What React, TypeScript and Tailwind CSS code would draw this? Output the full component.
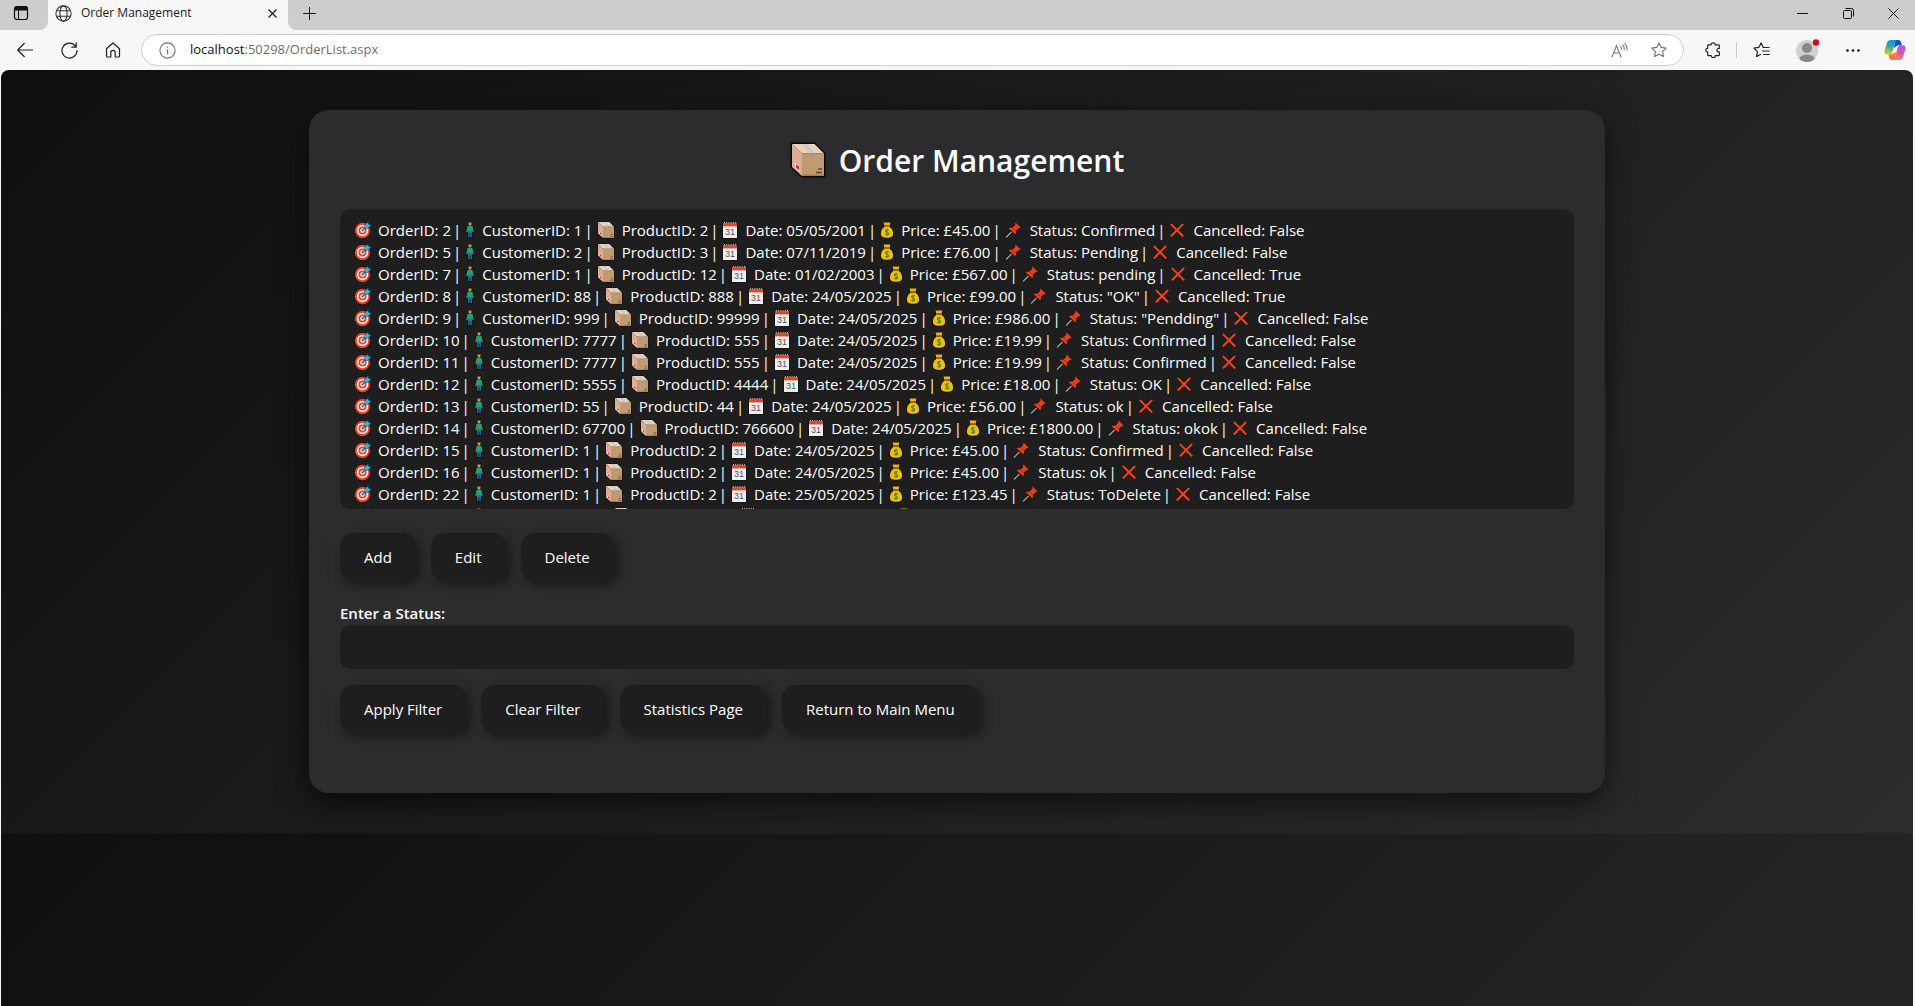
import React from "react";

type Order = {
  id: string;
  customer: string;
  product: string;
  date: string;
  price: string;
  status: string;
  cancelled: string;
};

const orders: Order[] = [
  { id: "2", customer: "1", product: "2", date: "05/05/2001", price: "45.00", status: "Confirmed", cancelled: "False" },
  { id: "5", customer: "2", product: "3", date: "07/11/2019", price: "76.00", status: "Pending", cancelled: "False" },
  { id: "7", customer: "1", product: "12", date: "01/02/2003", price: "567.00", status: "pending", cancelled: "True" },
  { id: "8", customer: "88", product: "888", date: "24/05/2025", price: "99.00", status: '"OK"', cancelled: "True" },
  { id: "9", customer: "999", product: "99999", date: "24/05/2025", price: "986.00", status: '"Pendding"', cancelled: "False" },
  { id: "10", customer: "7777", product: "555", date: "24/05/2025", price: "19.99", status: "Confirmed", cancelled: "False" },
  { id: "11", customer: "7777", product: "555", date: "24/05/2025", price: "19.99", status: "Confirmed", cancelled: "False" },
  { id: "12", customer: "5555", product: "4444", date: "24/05/2025", price: "18.00", status: "OK", cancelled: "False" },
  { id: "13", customer: "55", product: "44", date: "24/05/2025", price: "56.00", status: "ok", cancelled: "False" },
  { id: "14", customer: "67700", product: "766600", date: "24/05/2025", price: "1800.00", status: "okok", cancelled: "False" },
  { id: "15", customer: "1", product: "2", date: "24/05/2025", price: "45.00", status: "Confirmed", cancelled: "False" },
  { id: "16", customer: "1", product: "2", date: "24/05/2025", price: "45.00", status: "ok", cancelled: "False" },
  { id: "22", customer: "1", product: "2", date: "25/05/2025", price: "123.45", status: "ToDelete", cancelled: "False" },
  { id: "23", customer: "12", product: "2", date: "25/05/2025", price: "45.00", status: "ok", cancelled: "False" },
];

function TargetIcon() {
  return (
    <svg className="mr-[6px] h-[18px] w-[18px] shrink-0" viewBox="0 0 18 18" aria-hidden="true">
      <circle cx="8.5" cy="9.5" r="8.3" fill="#111" />
      <circle cx="8.5" cy="9.5" r="7.7" fill="#e5432a" />
      <circle cx="8.5" cy="9.5" r="5.7" fill="#f6f2f1" />
      <circle cx="8.5" cy="9.5" r="4" fill="#e5432a" />
      <circle cx="8.5" cy="9.5" r="2.3" fill="#f6f2f1" />
      <circle cx="8.5" cy="9.5" r="1.1" fill="#e5432a" />
      <path d="M8.5 9.5 13 5" stroke="#1c6ea6" strokeWidth="1.2" />
      <path d="M10.8 7.6 10.6 4.6 14 1l.6 2.3 2.6.8-3.6 3.4z" fill="#2fb4f0" stroke="#123c58" strokeWidth=".5" />
    </svg>
  );
}

function PersonIcon() {
  return (
    <svg className="mr-[7px] h-[18px] w-[10px] shrink-0" viewBox="0 0 10 18" aria-hidden="true">
      <path d="M3.4 1h3.2v3.4l1.8 1.2.5 6.2H7.300V17H2.700v-5.200H1.100l.5-6.200 1.800-1.200z" fill="#111" stroke="#111" strokeWidth=".6" />
      <rect x="3.600" y="1" width="2.800" height="3.600" rx="1.200" fill="#d9a43a" />
      <path d="M3.600 1h2.800v1.200H3.600z" fill="#8a5a20" />
      <path d="M2.500 5h5l.7 3.600H7v2.200H3V8.600H1.800z" fill="#17a583" />
      <path d="M1.600 8.600h1v2.600h-1zM7.400 8.600h1v2.600h-1z" fill="#d9a43a" />
      <path d="M3.100 10.600h3.800V16H5.400v-3.400h-.8V16H3.100z" fill="#1f6fb4" />
    </svg>
  );
}

function BoxIcon({ className, outline }: { className: string; outline: number }) {
  return (
    <svg className={className} viewBox="0 0 36 36" aria-hidden="true">
      <path d="M2 2h22.500l9.500 9.500V34H12L2 25z" fill="#0c0a09" stroke="#0c0a09" strokeWidth={outline} strokeLinejoin="round" />
      <path d="M2 2h22.500L34 11.500H12z" fill="#edd0bb" />
      <path d="M2 2l10 9.500V34L2 25z" fill="#dbae95" />
      <path d="M12 11.500h22V34H12z" fill="#c19a70" />
      <path d="M12 32.500h22V34H12z" fill="#a87e52" />
      <path d="M12 2h5l8 9.500h-5z" fill="#c9c8ca" />
      <path d="M20 11.500h5V14h-5z" fill="#9a938c" />
      <path d="M5 20.500l5 4v5.500l-5-4z" fill="#f3ded5" />
      <path d="M6 22.200l3.200 2.600v3.400L6 25.600z" fill="#e01f3d" />
      <path d="M28 27h4M26 30.500h6" stroke="#5d4630" strokeWidth="1.3" />
    </svg>
  );
}

function CalendarIcon() {
  return (
    <svg className="mr-[7px] h-[18px] w-[16px] shrink-0" viewBox="0 0 16 18" aria-hidden="true">
      <rect x=".3" y="1" width="15.400" height="16.600" fill="#111" />
      <rect x="1" y="2" width="14" height="15" fill="#f1f0f0" />
      <rect x="1" y="2" width="14" height="3.400" fill="#e5432a" />
      <path d="M2 1.700h12" stroke="#f6d8d3" strokeWidth="1" strokeDasharray="1 1.200" />
      <text x="8" y="14.300" textAnchor="middle" fontFamily="Liberation Sans" fontSize="9" fill="#555">31</text>
    </svg>
  );
}

function MoneyIcon() {
  return (
    <svg className="mr-[7px] h-[18px] w-[14px] shrink-0" viewBox="0 0 14 18" aria-hidden="true">
      <path d="M3 1h8v3.500l-1 1c2.600 1.800 3.800 4.500 3.800 7.200 0 3-2 4.800-6.800 4.800S.2 15.700.2 12.700C.2 10 1.400 7.300 4 5.500l-1-1z" fill="#111" />
      <path d="M4.500 5.700h5c2.500 1.700 3.600 4.200 3.600 6.800 0 3-2 4.200-6.100 4.200S.9 15.500.9 12.500c0-2.600 1.100-5.100 3.600-6.800z" fill="#f7bd0c" />
      <path d="M3.500 1.500h7L9.700 4.500H4.300z" fill="#f2b21a" />
      <path d="M4 5.100h6" stroke="#b0761a" strokeWidth="1.100" />
      <path d="M8.900 9.200C7.900 8.300 5.400 8.500 5.400 10c0 1.700 3.400.9 3.400 2.600 0 1.500-2.500 1.600-3.600.7M7 7.700v7" fill="none" stroke="#3f8f2f" strokeWidth="1.100" />
    </svg>
  );
}

function PinIcon() {
  return (
    <svg className="mr-[8px] h-[18px] w-[17px] shrink-0" viewBox="0 0 17 18" aria-hidden="true">
      <path d="M1 16.500 6.500 11" stroke="#111" strokeWidth="2.400" />
      <path d="M1 16.500 6.500 11" stroke="#a9a9a9" strokeWidth="1.200" />
      <path d="M10.600 1.200l5.500 5.400c-.8.900-1.700 1-2.500.8L11.300 9.800c.3 1.600 0 2.900-.9 3.900L3.300 7.200c1.100-.9 2.500-1.200 4-.8l2.600-2.500c-.3-1-.1-1.900.7-2.700z" fill="#e8401c" stroke="#1a0d09" strokeWidth=".6" />
      <path d="M7.600 6.800l3.200 3.100" stroke="#b52d10" strokeWidth="1" />
    </svg>
  );
}

function CrossIcon() {
  return (
    <svg className="mr-[8px] h-[18px] w-[16px] shrink-0" viewBox="0 0 16 18" aria-hidden="true">
      <path d="M1.800 3l12.400 12.400M14.200 3 1.800 15.400" stroke="#180b08" strokeWidth="3.600" />
      <path d="M1.800 3l12.400 12.400M14.200 3 1.800 15.400" stroke="#e5421f" strokeWidth="2.300" />
    </svg>
  );
}

function Bar() {
  return <span className="mr-[4px] ml-[2px]">|</span>;
}

function OrderRow({ order }: { order: Order }) {
  return (
    <li role="option" aria-selected="false" className="flex h-[22px] items-center whitespace-pre">
      <TargetIcon />
      <span>OrderID: {order.id}</span>
      <Bar />
      <PersonIcon />
      <span>CustomerID: {order.customer}</span>
      <Bar />
      <BoxIcon className="mr-[7px] h-[18px] w-[18px] shrink-0" outline={2} />
      <span>ProductID: {order.product}</span>
      <Bar />
      <CalendarIcon />
      <span>Date: {order.date}</span>
      <Bar />
      <MoneyIcon />
      <span>Price: £{order.price}</span>
      <Bar />
      <PinIcon />
      <span>Status: {order.status}</span>
      <Bar />
      <CrossIcon />
      <span>Cancelled: {order.cancelled}</span>
    </li>
  );
}

function ActionButton({ children }: { children: React.ReactNode }) {
  return (
    <button
      type="button"
      className="h-12 rounded-[14px] bg-[#1e1e1e] px-6 text-[15px] text-white shadow-[4px_4px_10px_#1a1a1a,-4px_-4px_10px_#2e2e2e]"
    >
      {children}
    </button>
  );
}

function IconButton({ label, className, children }: { label: string; className: string; children: React.ReactNode }) {
  return (
    <button type="button" aria-label={label} className={className}>
      {children}
    </button>
  );
}

const centered = "flex h-8 w-11 shrink-0 items-center justify-center";

function TabStrip() {
  return (
    <div className="flex h-[30px] bg-[#f7f7f7]">
      <div className="flex w-12 rounded-br-lg bg-[#cdcdcd]">
        <IconButton label="Tab actions" className="flex h-[26px] w-[42px] items-center justify-center">
          <svg className="h-4 w-4" viewBox="0 0 16 16" fill="none" stroke="#111" aria-hidden="true">
            <rect x="1.500" y="1.500" width="13" height="13" rx="2.500" strokeWidth="1.200" />
            <path d="M1.500 4V3.500a2 2 0 0 1 2-2h9a2 2 0 0 1 2 2V5h-13z" fill="#111" />
            <path d="M5.500 5v9.500" strokeWidth="1.100" />
          </svg>
        </IconButton>
      </div>
      <div className="flex w-60 items-center pr-2 pb-1 pl-[7px]">
        <svg className="h-[17px] w-[17px]" viewBox="0 0 17 17" fill="none" stroke="#333" strokeWidth="1.100" aria-hidden="true">
          <circle cx="8.500" cy="8.500" r="7.600" />
          <ellipse cx="8.500" cy="8.500" rx="3.600" ry="7.600" />
          <path d="M1.600 5.800h13.800M1.600 11.200h13.800" />
        </svg>
        <span className="ml-[9px] flex-1 text-[12px] text-[#1b1b1b]">Order Management</span>
        <IconButton label="Close tab" className="flex h-4 w-4 items-center justify-center">
          <svg className="h-[9px] w-[9px]" viewBox="0 0 9 9" stroke="#222" strokeWidth="1.300" aria-hidden="true">
            <path d="M.5.500l8 8M8.500.500l-8 8" />
          </svg>
        </IconButton>
      </div>
      <div className="flex flex-1 justify-between rounded-bl-lg bg-[#cdcdcd] pb-1">
        <IconButton label="New tab" className="flex w-[43px] items-center justify-center">
          <svg className="h-[13px] w-[13px]" viewBox="0 0 13 13" stroke="#111" strokeWidth="1" aria-hidden="true">
            <path d="M6.500 0v13M0 6.500h13" />
          </svg>
        </IconButton>
        <div className="flex">
          <IconButton label="Minimize" className="flex w-[46px] items-center justify-center">
            <svg className="h-[11px] w-[11px]" viewBox="0 0 11 11" stroke="#111" aria-hidden="true">
              <path d="M0 5.500h11" />
            </svg>
          </IconButton>
          <IconButton label="Restore" className="flex w-[46px] items-center justify-center">
            <svg className="h-[11px] w-[11px]" viewBox="0 0 11 11" fill="none" stroke="#111" aria-hidden="true">
              <rect x=".5" y="2.500" width="8" height="8" rx="1" />
              <path d="M2.500.500h6a2 2 0 0 1 2 2v6" />
            </svg>
          </IconButton>
          <IconButton label="Close" className="flex w-11 items-center justify-center">
            <svg className="h-[11px] w-[11px]" viewBox="0 0 11 11" stroke="#111" aria-hidden="true">
              <path d="M.5.500l10 10M10.500.500l-10 10" />
            </svg>
          </IconButton>
        </div>
      </div>
    </div>
  );
}

function Toolbar() {
  return (
    <div className="flex h-10 items-center pl-[3px]">
      <IconButton label="Back" className={centered}>
        <svg className="h-4 w-4" viewBox="0 0 16 16" fill="none" stroke="#222" strokeWidth="1.200" strokeLinecap="round" strokeLinejoin="round" aria-hidden="true">
          <path d="M15.500 8H.8M7.200 1.500.700 8l6.500 6.500" />
        </svg>
      </IconButton>
      <IconButton label="Refresh" className={centered}>
        <svg className="h-[17px] w-[17px]" viewBox="0 0 17 17" fill="none" stroke="#222" strokeWidth="1.200" strokeLinecap="round" strokeLinejoin="round" aria-hidden="true">
          <path d="M16 8.500A7.500 7.500 0 1 1 14.600 4.200M15.200.800v4.400h-4.400" />
        </svg>
      </IconButton>
      <IconButton label="Home" className={centered}>
        <svg className="h-4 w-4" viewBox="0 0 16 16" fill="none" stroke="#222" strokeWidth="1.200" strokeLinejoin="round" aria-hidden="true">
          <path d="M1.500 6.800 8 1l6.500 5.800V14a1 1 0 0 1-1 1H10.200v-4.500a2.200 2.200 0 0 0-4.400 0V15H2.500a1 1 0 0 1-1-1z" />
        </svg>
      </IconButton>
      <div className="ml-[6px] flex h-8 flex-1 items-center rounded-full border border-[#cfcfcf] bg-white pr-1 pl-[17px]">
        <IconButton label="View site information" className="flex h-[17px] w-[17px] items-center justify-center">
          <svg className="h-[17px] w-[17px]" viewBox="0 0 17 17" fill="none" stroke="#707070" strokeWidth="1.100" aria-hidden="true">
            <circle cx="8.500" cy="8.500" r="7.600" />
            <path d="M8.500 7.300v5M8.500 4.400v1.400" strokeWidth="1.300" />
          </svg>
        </IconButton>
        <span className="ml-[14px] flex-1 text-[13px] text-[#6e6e6e]">
          <span className="text-[#111]">localhost</span>:50298/OrderList.aspx
        </span>
        <IconButton label="Read aloud" className="flex h-8 w-10 items-center justify-center">
          <svg className="h-[15px] w-[17px]" viewBox="0 0 17 15" fill="none" stroke="#777" strokeWidth="1.100" strokeLinecap="round" aria-hidden="true">
            <path d="M1 14 5.500 2.800 10 14M2.600 10h5.800" />
            <path d="M9.600 3.600c.7.700 1 1.700.8 2.800M11.700 2c1.300 1.300 1.800 3 1.400 5M13.700.600c1.900 1.700 2.700 4 2.200 6.600" />
          </svg>
        </IconButton>
        <IconButton label="Add to favorites" className="flex h-8 w-10 items-center justify-center">
          <svg className="h-4 w-4" viewBox="0 0 16 16" fill="none" stroke="#707070" strokeWidth="1.100" strokeLinejoin="round" aria-hidden="true">
            <path d="M8 .900l2.200 4.500 4.900.700-3.500 3.500.8 4.900L8 12.200l-4.400 2.300.8-4.900L.9 6.100l4.900-.7z" />
          </svg>
        </IconButton>
      </div>
      <IconButton label="Extensions" className="ml-[7px] flex h-8 w-11 items-center justify-center">
        <svg className="h-4 w-4" viewBox="0 0 16 16" fill="none" stroke="#222" strokeWidth="1.200" strokeLinejoin="round" aria-hidden="true">
          <path d="M3.500 2.800h2.600a2 2 0 1 1 4 0h3.400a.8.800 0 0 1 .8.800v2.900h-.7a1.700 1.700 0 0 0 0 3.400h.7v3a.8.800 0 0 1-.8.800h-3.200a2 2 0 0 1-4 0H3.500a.8.800 0 0 1-.8-.8v-2.800a1.800 1.800 0 1 1 0-3.800V3.600a.8.800 0 0 1 .8-.8z" />
        </svg>
      </IconButton>
      <div className="ml-px h-4 w-px bg-[#c8c8c8]" />
      <IconButton label="Favorites" className="ml-[2px] flex h-8 w-11 items-center justify-center">
        <svg className="h-4 w-[17px]" viewBox="0 0 17 16" fill="none" stroke="#222" strokeWidth="1.200" strokeLinecap="round" strokeLinejoin="round" aria-hidden="true">
          <path d="M10.200 5.300 8.100.900 5.800 5.400.9 6.100l3.500 3.500-.8 4.900L7.500 12.500M10.200 5.500h6M9.500 9h6.700M10.500 12.500h5.700" />
        </svg>
      </IconButton>
      <IconButton label="Profile" className="ml-[3px] flex h-8 w-11 items-center justify-center">
        <svg className="h-6 w-6" viewBox="0 0 24 24" aria-hidden="true">
          <defs>
            <clipPath id="avatar">
              <circle cx="11" cy="13" r="11" />
            </clipPath>
          </defs>
          <circle cx="11" cy="13" r="11" fill="#d2d0ce" />
          <g clipPath="url(#avatar)" fill="#8a8886">
            <circle cx="11" cy="10" r="5" />
            <ellipse cx="11" cy="22" rx="8" ry="5.500" />
          </g>
          <circle cx="20" cy="4.500" r="3.200" fill="#d20f16" />
        </svg>
      </IconButton>
      <IconButton label="Settings and more" className="ml-px flex h-8 w-11 items-center justify-center">
        <svg className="h-[3px] w-[14px]" viewBox="0 0 14 3" fill="#111" aria-hidden="true">
          <circle cx="1.500" cy="1.500" r="1.300" />
          <circle cx="7" cy="1.500" r="1.300" />
          <circle cx="12.500" cy="1.500" r="1.300" />
        </svg>
      </IconButton>
      <IconButton label="Copilot" className="flex h-8 w-10 items-center justify-center">
        <svg className="h-[22px] w-[22px]" viewBox="0 0 22 22" aria-hidden="true">
          <defs>
            <linearGradient id="copilotLeft" x1="0.400" y1="0" x2="0.200" y2="1">
              <stop offset="0" stopColor="#1b8fe0" />
              <stop offset=".4" stopColor="#27a6b8" />
              <stop offset=".7" stopColor="#8cc04b" />
              <stop offset="1" stopColor="#f2c31b" />
            </linearGradient>
            <linearGradient id="copilotRight" x1="0.700" y1="0" x2="0.300" y2="1">
              <stop offset="0" stopColor="#9b5cf0" />
              <stop offset=".5" stopColor="#e0529c" />
              <stop offset="1" stopColor="#fb8a52" />
            </linearGradient>
          </defs>
          <path d="M11 1h3.500c1.400 0 2 .800 2.400 2l1 3.200h-4L10 9z" fill="#1552c4" />
          <path d="M11 21H7.800c-1.400 0-2-.800-2.400-2l-1-3.500 4-.5L12 13z" fill="#f5763b" />
          <path d="M6.800 1h6.400c-1.200.3-1.800 1.100-2.200 2.400L8.400 12.700c-.5 1.800-1.200 2.800-2.800 2.800H3C.800 15.500 0 13.800.600 11.500L3 4C3.700 2 4.800 1 6.800 1z" fill="url(#copilotLeft)" />
          <path d="M15.200 21H8.800c1.200-.3 1.800-1.100 2.200-2.400l2.600-9.600c.5-1.800 1.200-2.800 2.800-2.800H19c2.200 0 3 1.700 2.400 4L19 18c-.7 2-1.800 3-3.800 3z" fill="url(#copilotRight)" />
        </svg>
      </IconButton>
    </div>
  );
}

export default function App() {
  return (
    <div className="flex min-h-screen flex-col bg-[#f7f7f7] font-['Open_Sans','Noto_Sans',sans-serif]">
      <header>
        <TabStrip />
        <Toolbar />
      </header>
      <main className="mr-[2px] ml-px flex-1 rounded-t-lg bg-[linear-gradient(135deg,#0f0f0f,#2c2c2c)] bg-[length:100%_764px] px-10 pt-10 text-[15px] text-white">
        <section className="mx-auto max-w-[1296px] rounded-[20px] bg-[#2c2c2e] px-[31px] pt-7 pb-[60px] shadow-[0_10px_30px_rgba(0,0,0,0.6)]">
          <h1 className="flex h-11 items-center justify-center gap-[13px] text-[30px] font-semibold">
            <BoxIcon className="h-9 w-9" outline={3} />
            Order Management
          </h1>
          <ul role="listbox" aria-label="Orders" className="mt-[27px] h-[300px] overflow-hidden rounded-[10px] bg-[#1e1e1e] px-[14px] py-[10px]">
            {orders.map((order) => (
              <OrderRow key={order.id} order={order} />
            ))}
          </ul>
          <div className="mt-6 flex flex-wrap gap-[15px]">
            <ActionButton>Add</ActionButton>
            <ActionButton>Edit</ActionButton>
            <ActionButton>Delete</ActionButton>
          </div>
          <label htmlFor="status" className="mt-[21px] block h-[22px] font-semibold">
            Enter a Status:
          </label>
          <input id="status" type="text" className="mt-px block h-11 w-full rounded-[10px] bg-[#1e1e1e] px-3 outline-none" />
          <div className="mt-4 flex flex-wrap gap-[15px]">
            <ActionButton>Apply Filter</ActionButton>
            <ActionButton>Clear Filter</ActionButton>
            <ActionButton>Statistics Page</ActionButton>
            <ActionButton>Return to Main Menu</ActionButton>
          </div>
        </section>
      </main>
    </div>
  );
}
